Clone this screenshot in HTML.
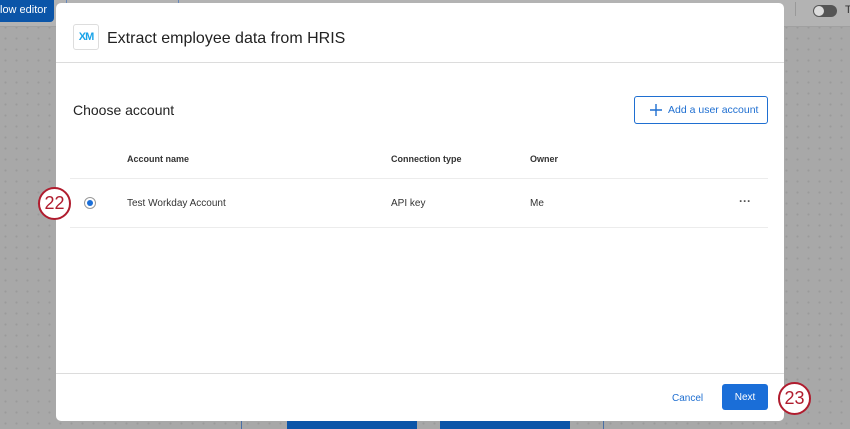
<!DOCTYPE html>
<html><head><meta charset="utf-8"><style>
*{margin:0;padding:0;box-sizing:border-box}
body{width:850px;height:429px;overflow:hidden;position:relative;font-family:"Liberation Sans",sans-serif;background-color:#a8a8a8;background-image:radial-gradient(circle,#9a9a9a 1px,transparent 1.2px);background-size:11px 11px;}
.topbar{position:absolute;left:0;top:0;width:850px;height:27px;background:#b3b3b3;border-bottom:1px solid #a0a0a0}
.abs{position:absolute}
.modal{position:absolute;left:56px;top:3px;width:728px;height:418px;background:#fff;border-radius:5px}
.ann{position:absolute;width:33px;height:33px;border:2.5px solid #b01c2e;border-radius:50%;background:#fff;color:#b01c2e;font-size:18px;text-align:center;line-height:29px}
</style></head><body>
<div class="topbar"></div>
<div class="abs" style="left:0;top:0;width:54px;height:22px;background:#0b55a8;border-radius:0 0 4px 0;color:#fff;font-size:11px;line-height:20px">low editor</div>
<div class="abs" style="left:66px;top:0;width:1px;height:14px;background:#6688bb"></div>
<div class="abs" style="left:178px;top:0;width:1px;height:4px;background:#6688bb"></div>
<div class="abs" style="left:795px;top:2px;width:1px;height:14px;background:#999"></div>
<div class="abs" style="left:813px;top:5px;width:24px;height:12px;border-radius:6px;background:#555"></div>
<div class="abs" style="left:814px;top:6px;width:10px;height:10px;border-radius:50%;background:#ddd"></div>
<div class="abs" style="left:845px;top:4px;font-size:11px;color:#333">T</div>
<div class="abs" style="left:241px;top:416px;width:1px;height:13px;background:#4a6fa5"></div>
<div class="abs" style="left:603px;top:416px;width:1px;height:13px;background:#4a6fa5"></div>
<div class="abs" style="left:287px;top:416px;width:130px;height:13px;background:#0b55a8"></div>
<div class="abs" style="left:440px;top:416px;width:130px;height:13px;background:#0b55a8"></div>

<div class="modal">
  <div class="abs" style="left:17px;top:21px;width:26px;height:26px;border:1px solid #ddd;border-radius:3px;font-size:11px;font-weight:bold;color:#1aa3e8;text-align:center;line-height:24px;letter-spacing:-1px">XM</div>
  <div class="abs" style="left:51px;top:27px;font-size:16px;color:#222">Extract employee data from HRIS</div>
  <div class="abs" style="left:0;top:59px;width:728px;height:1px;background:#dcdcdc"></div>
  <div class="abs" style="left:17px;top:99px;font-size:14px;color:#222">Choose account</div>
  <div class="abs" style="left:578px;top:93px;width:134px;height:28px;border:1px solid #1f6fd1;border-radius:3px;color:#1f6fd1;font-size:10.5px;line-height:27px;padding-left:33px">Add a user account</div>
  <svg class="abs" style="left:593px;top:100px" width="14" height="14"><path d="M7 1V13M1 7H13" stroke="#1f6fd1" stroke-width="1.4"/></svg>
  <div class="abs" style="left:71px;top:151px;font-size:9px;font-weight:bold;color:#333">Account name</div>
  <div class="abs" style="left:335px;top:151px;font-size:9px;font-weight:bold;color:#333">Connection type</div>
  <div class="abs" style="left:474px;top:151px;font-size:9px;font-weight:bold;color:#333">Owner</div>
  <div class="abs" style="left:14px;top:175px;width:698px;height:1px;background:#ececec"></div>
  <div class="abs" style="left:28px;top:194px;width:12px;height:12px;border-radius:50%;border:1px solid #999;background:#fff"></div>
  <div class="abs" style="left:31px;top:197px;width:6px;height:6px;border-radius:50%;background:#1a6ed8"></div>
  <div class="abs" style="left:71px;top:195px;font-size:10px;color:#333">Test Workday Account</div>
  <div class="abs" style="left:335px;top:195px;font-size:10px;color:#333">API key</div>
  <div class="abs" style="left:474px;top:195px;font-size:10px;color:#333">Me</div>
  <div class="abs" style="left:683px;top:191px;font-size:12px;color:#555;font-weight:bold;letter-spacing:0px">···</div>
  <div class="abs" style="left:14px;top:224px;width:698px;height:1px;background:#ececec"></div>
  <div class="abs" style="left:0;top:370px;width:728px;height:1px;background:#dcdcdc"></div>
  <div class="abs" style="left:616px;top:390px;font-size:10px;color:#1f6fd1">Cancel</div>
  <div class="abs" style="left:666px;top:381px;width:46px;height:26px;background:#1a6ed8;border-radius:3px;color:#fff;font-size:10px;text-align:center;line-height:27px">Next</div>
</div>
<div class="ann" style="left:38px;top:187px">22</div>
<div class="ann" style="left:778px;top:382px">23</div>
</body></html>
